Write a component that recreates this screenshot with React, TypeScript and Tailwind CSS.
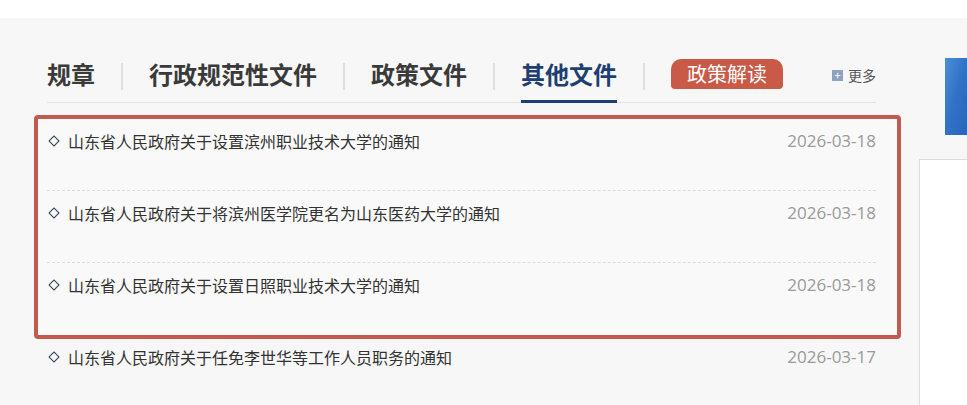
const TABS = ["规章", "行政规范性文件", "政策文件", "其他文件"];
const ACTIVE = "其他文件";

type Notice = { title: string; date: string };

const HIGHLIGHTED: Notice[] = [
  { title: "山东省人民政府关于设置滨州职业技术大学的通知", date: "2026-03-18" },
  { title: "山东省人民政府关于将滨州医学院更名为山东医药大学的通知", date: "2026-03-18" },
  { title: "山东省人民政府关于设置日照职业技术大学的通知", date: "2026-03-18" },
];

const REST: Notice[] = [
  { title: "山东省人民政府关于任免李世华等工作人员职务的通知", date: "2026-03-17" },
];

const cjk = { fontFamily: '"Noto Sans CJK SC", "Noto Sans", sans-serif' };

function Row({ item, last }: { item: Notice; last?: boolean }) {
  return (
    <li
      className={`flex h-[72px] items-start pt-[12px] ${
        last ? "" : "border-b border-dashed border-[#dcdcdc]"
      }`}
    >
      <div className="flex h-[20px] flex-1 items-center">
        <span className="ml-[3px] mr-[10px] block h-[8px] w-[8px] rotate-45 border border-[#2c3b58]" />
        <span className="text-[16px] leading-[20px] text-[#333]" style={cjk}>
          {item.title}
        </span>
      </div>
      <span
        className="text-[17px] leading-[20px] text-[#9a9a9a]"
        style={{ fontFamily: '"Open Sans", "Noto Sans", sans-serif' }}
      >
        {item.date}
      </span>
    </li>
  );
}

export default function App() {
  return (
    <div className="h-[405px] w-[967px] overflow-hidden bg-white" style={cjk}>
      <div className="mt-[18px] flex h-[387px] bg-[#f7f7f7]">
        {/* policy document tabs + list */}
        <section className="ml-[47px] w-[829px] pt-[41px]">
          <div className="flex h-[44px] items-start border-b border-[#e3e3e3]">
            {TABS.map((t, i) => (
              <div key={t} className="flex items-start">
                {i > 0 && (
                  <span className="mx-[26px] mt-[4px] block h-[27px] w-[2px] bg-[#dedede]" />
                )}
                <div className="flex flex-col">
                  <span
                    className={`text-[24px] font-bold leading-[30px] ${
                      t === ACTIVE ? "text-[#1f3e72]" : "text-[#3a3a3a]"
                    }`}
                  >
                    {t}
                  </span>
                  {t === ACTIVE && (
                    <span className="mt-[11px] block h-[3px] w-full bg-[#1f3e72]" />
                  )}
                </div>
              </div>
            ))}
            <span className="mx-[26px] mt-[4px] block h-[27px] w-[2px] bg-[#dedede]" />
            <span className="flex h-[30px] w-[112px] items-center justify-center rounded-t-[10px] rounded-b-[4px] bg-[#c85a47] text-[20px] text-white">
              政策解读
            </span>
            <a className="ml-auto mt-[6px] flex items-center gap-[5px] text-[14px] text-[#555]">
              <span className="flex h-[11px] w-[11px] items-center justify-center bg-[#8ea3c0] text-[11px] leading-none text-white">
                +
              </span>
              更多
            </a>
          </div>

          <div className="-ml-[13px] -mr-[25px] mt-[12px] mb-[-4px] rounded-[4px] border-4 border-[#c25a50] bg-[#f9f9f9] pl-[9px] pr-[21px]">
            <ul>
              {HIGHLIGHTED.map((n, i) => (
                <Row key={n.title} item={n} last={i === HIGHLIGHTED.length - 1} />
              ))}
            </ul>
          </div>
          <ul>
            {REST.map((n) => (
              <Row key={n.title} item={n} last />
            ))}
          </ul>
        </section>

        {/* side column */}
        <aside className="ml-[43px] flex flex-1 flex-col">
          <div className="ml-[26px] mt-[40px] h-[77px] bg-gradient-to-br from-[#4d8fd8] via-[#2f72c6] to-[#2a66b8]" />
          <div className="mt-[24px] flex-1 border-l border-t border-[#dcdcdc] bg-white" />
        </aside>
      </div>
    </div>
  );
}
